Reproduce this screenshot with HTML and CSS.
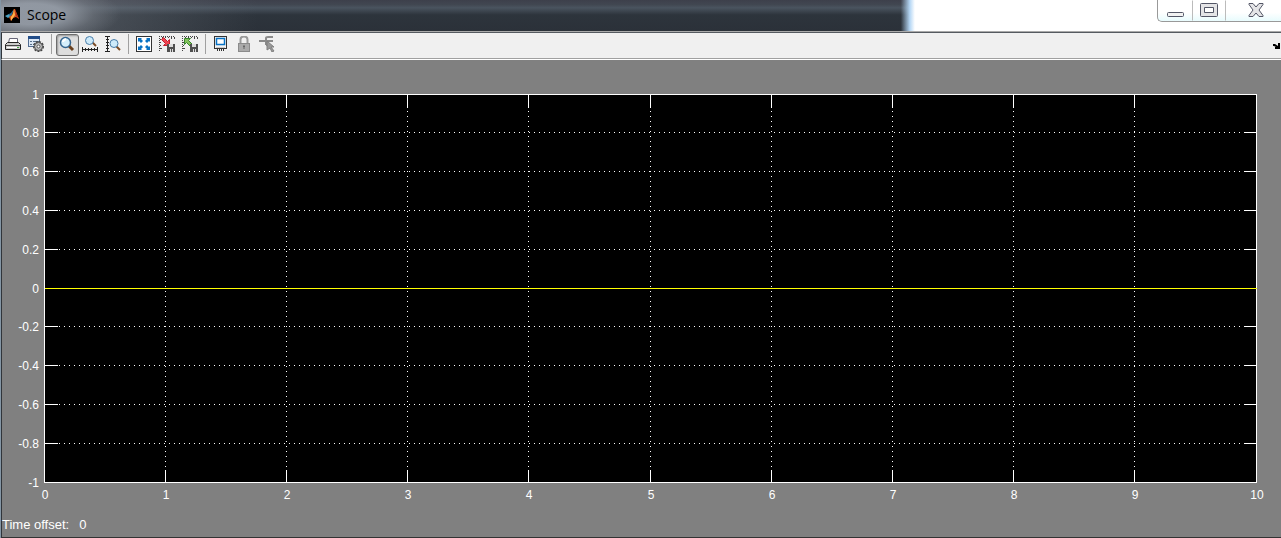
FILE: index.html
```html
<!DOCTYPE html>
<html lang="en">
<head>
    <meta charset="UTF-8">
    <meta name="viewport" content="width=device-width, initial-scale=1.0">
    <title>Scope</title>
    <link rel="stylesheet" href="styles.css">
</head>
<body>

<div class="window">
    <header class="titlebar">
        <svg class="logo" viewBox="0 0 16 16" width="16" height="16">
            <rect width="16" height="16" fill="#000"/>
            <path d="M1 9L5 7L7 9L4 11z" fill="#4da3c4"/>
            <path d="M5 7L7 6L10 2L8 8L6 10z" fill="#2b6f94"/>
            <path d="M10 2L11 2L15 12L12 10L9 11L7 14L5 10L8 8z" fill="#d8501c"/>
            <path d="M10 2L11 8L9 11L7 14L7 10L9 7z" fill="#ffb347"/>
            <path d="M11 3L15 12L12 9z" fill="#a32b16"/>
        </svg>
        <h1>Scope</h1>
        <div class="window-buttons">
            <button class="minimize" aria-label="Minimize">
                <svg viewBox="0 0 17 5" width="17" height="5"><rect x=".5" y=".5" width="16" height="4" rx="1" fill="#f2f2f2" stroke="#535666"/></svg>
            </button>
            <button class="maximize" aria-label="Maximize">
                <svg viewBox="0 0 18 14" width="18" height="14"><path d="M1.5.5h15q1 0 1 1v11q0 1-1 1h-15q-1 0-1-1v-11q0-1 1-1zM4.500 4.500v5h9v-5z" fill="#e4e4e6" fill-rule="evenodd" stroke="#535666"/></svg>
            </button>
            <button class="close" aria-label="Close">
                <svg viewBox="0 0 16 14" width="16" height="14"><path d="M1 .5h4l3 3.500 3-3.500h4v1l-4 5.500 4 5.500v1h-4l-3-3.500-3 3.500H1v-1l4-5.500-4-5.500z" fill="#e4e4e6" stroke="#535666"/></svg>
            </button>
        </div>
    </header>

    <div class="toolbar">
        <button aria-label="Print">
            <svg viewBox="0 0 16 16" width="16" height="16">
                <path d="M3.500 7L4.500 2.500h8L12.500 7" fill="#fff" stroke="#667"/>
                <path d="M.5 8.500l2-2h11l2 2v5H.5z" fill="#ccc" stroke="#222"/>
                <path d="M1 9.500h14" stroke="#444"/>
                <path d="M2 11.500h10" stroke="#fff"/>
                <path d="M12 11.500h2" stroke="#4a4"/>
            </svg>
        </button>
        <button aria-label="Parameters">
            <svg viewBox="0 0 16 16" width="16" height="16">
                <rect x=".5" y=".5" width="11" height="10" fill="#dce8f5" stroke="#526c91"/>
                <path d="M0 1.500h12" stroke="#224d88" stroke-width="3"/>
                <path d="M2 5.500h2M2 8.500h2M5 5.500h6M5 8.500h5" stroke="#58708c"/>
                <circle cx="10.500" cy="10.500" r="4.500" fill="#aaa" stroke="#444" stroke-width="2" stroke-dasharray="2 1"/>
                <circle cx="10.500" cy="10.500" r="4" fill="#bbb" stroke="#555"/>
                <circle cx="10.500" cy="10.500" r="1.500" fill="#fff" stroke="#555"/>
            </svg>
        </button>
        <span class="separator"></span>
        <button class="active" aria-label="Zoom">
            <svg viewBox="0 0 16 16" width="16" height="16">
                <path d="M10 10l4 4" stroke="#69401f" stroke-width="3"/>
                <circle cx="6.500" cy="6.500" r="5" fill="#d5eefb" stroke="#35658f" stroke-width="1.500"/>
                <path d="M4 6q0-2 3-3" fill="none" stroke="#fff" stroke-width="2"/>
            </svg>
        </button>
        <button aria-label="Zoom X-axis">
            <svg viewBox="0 0 16 16" width="16" height="16">
                <path d="M10 6l4 4" stroke="#7a4a24" stroke-width="2"/>
                <circle cx="7.500" cy="4.500" r="4" fill="#cdeafa" stroke="#477ca8"/>
                <path d="M0 13.500h16M.5 11v5M3.500 12v3M6.500 12v3M9.500 12v3M12.500 12v3M15.500 11v5" stroke="#222"/>
            </svg>
        </button>
        <button aria-label="Zoom Y-axis">
            <svg viewBox="0 0 16 16" width="16" height="16">
                <path d="M11 10l4 4" stroke="#7a4a24" stroke-width="2"/>
                <circle cx="9" cy="7.500" r="4" fill="#cdeafa" stroke="#477ca8"/>
                <path d="M2.500 0v16M0 .5h5M1 3.500h3M1 6.500h3M1 9.500h3M1 12.500h3M0 15.500h5" stroke="#222"/>
            </svg>
        </button>
        <span class="separator"></span>
        <button aria-label="Autoscale">
            <svg viewBox="0 0 16 16" width="16" height="16">
                <rect x=".5" y=".5" width="15" height="15" fill="#fff" stroke="#333"/>
                <path d="M2 2h4L5 3l2 2-2 2-2-2-1 1zM14 2v4l-1-1-2 2-2-2 2-2-1-1zM2 14v-4l1 1 2-2 2 2-2 2 1 1zM14 14h-4l1-1-2-2 2-2 2 2 1-1z" fill="#0872c4"/>
            </svg>
        </button>
        <button aria-label="Save current axes settings">
            <svg viewBox="0 0 16 16" width="16" height="16">
                <path d="M0 .5h16M.5 0v15" stroke="#444" stroke-dasharray="1 1"/>
                <path d="M3.500 1v1M6.500 1v1M9.500 1v1M12.500 1v2M15.500 1v2M1 3.500h1M1 6.500h1M1 9.500h1M1 12.500h2" stroke="#444"/>
                <path d="M2.500 3.500l2-2 4 4 2-2v6h-6l2-2z" fill="#f04450" stroke="#c01f2e"/>
                <path d="M8 8h8v8H8z" fill="#505050"/>
                <path d="M10 8h4v3h-4zM11 13h1v3h-1zM13 13h1v3h-1z" fill="#ddd"/>
            </svg>
        </button>
        <button aria-label="Restore saved axes settings">
            <svg viewBox="0 0 16 16" width="16" height="16">
                <path d="M0 .5h16M.5 0v15" stroke="#444" stroke-dasharray="1 1"/>
                <path d="M3.500 1v1M6.500 1v1M9.500 1v1M12.500 1v2M15.500 1v2M1 6.500h1M1 9.500h1M1 12.500h2" stroke="#444"/>
                <path d="M2.500 2.500h6l-2 2 4 4-2 2-4-4-2 2z" fill="#84c45c" stroke="#37832d"/>
                <path d="M8 8h8v8H8z" fill="#505050"/>
                <path d="M10 8h4v3h-4zM11 13h1v3h-1zM13 13h1v3h-1z" fill="#ddd"/>
            </svg>
        </button>
        <span class="separator"></span>
        <button aria-label="Floating scope">
            <svg viewBox="0 0 16 16" width="16" height="16">
                <rect x="1.500" y=".5" width="12" height="12" fill="#f4f4f4" stroke="#333"/>
                <rect x="3.500" y="2.500" width="8" height="6" fill="#fff" stroke="#0872c4" stroke-width="1.500"/>
                <path d="M3 11.500h9" stroke="#ccc"/>
                <path d="M4.500 13v2M6.500 13v2M8.500 13v2M10.500 13v2" stroke="#333"/>
            </svg>
        </button>
        <button aria-label="Lock axes selection" disabled>
            <svg viewBox="0 0 16 16" width="16" height="16">
                <path d="M4.500 8V3.500q0-3 3.500-3t3.500 3V8" fill="none" stroke="#999" stroke-width="2"/>
                <rect x="2.500" y="7.500" width="11" height="8" fill="#aaa" stroke="#8b8b8b"/>
                <path d="M8 9v4M7 10.500h2" stroke="#666"/>
            </svg>
        </button>
        <button aria-label="Signal selection" disabled>
            <svg viewBox="0 0 16 16" width="16" height="16">
                <path d="M0 5h14M7 9V2q0-1 2-1h5M7 9h4" fill="none" stroke="#8b8b8b" stroke-width="2"/>
                <path d="M8 5l7 6h-3l3 4-2 1-2-4-3 2z" fill="#999" stroke="#808080"/>
            </svg>
        </button>
        <button class="dock" aria-label="Dock">
            <svg viewBox="0 0 7 6" width="7" height="6"><path d="M0 1h2l3 2V0h2v6H2V4h1L1 3H0z"/></svg>
        </button>
    </div>

    <main>
        <svg class="plot" id="plot"></svg>
        <p class="status"><span>Time offset:</span><span>0</span></p>
    </main>
</div>

<script>
    const xMin = 0, xMax = 10, xStep = 1;
    const yMin = -1, yMax = 1, yStep = 0.2;
    const tick = 13;
    const plot = document.getElementById('plot');

    function line(x1, y1, x2, y2, cls) {
        return `<path class="${cls}" d="M${x1} ${y1}L${x2} ${y2}"/>`;
    }

    function draw() {
        const box = plot.getBoundingClientRect();
        const w = Math.floor(box.width) - 1;
        const h = Math.floor(box.height) - 1;
        let lines = `<rect class="area" width="${w}" height="${h}"/>`;
        let labels = '';

        const columns = Math.round((xMax - xMin) / xStep);
        for (let i = 0; i <= columns; i++) {
            const x = Math.floor(w * i / columns);
            if (i > 0 && i < columns) {
                lines += line(x, tick + 3, x, h - tick, 'grid');
                lines += line(x, 0, x, tick, 'axis');
                lines += line(x, h - tick, x, h, 'axis');
            }
            labels += `<text class="x-label" x="${x + 1}" y="${h + 17}">${xMin + i * xStep}</text>`;
        }

        const rows = Math.round((yMax - yMin) / yStep);
        for (let i = 0; i <= rows; i++) {
            const y = Math.floor(h * i / rows);
            if (i > 0 && i < rows) {
                lines += line(tick + 1, y, w - tick, y, 'grid');
                lines += line(0, y, tick, y, 'axis');
                lines += line(w - tick, y, w, y, 'axis');
            }
            const value = Number((yMax - i * yStep).toFixed(1)) || 0;
            labels += `<text class="y-label" x="-5" y="${y + 5}">${value}</text>`;
        }

        // signal is flat at zero
        const zero = Math.floor(h * yMax / (yMax - yMin));
        lines += line(0, zero, w, zero, 'signal');
        plot.innerHTML = `<g transform="translate(.5 .5)">${lines}</g>${labels}`;
    }

    window.addEventListener('resize', draw);
    draw();
</script>

</body>
</html>
```
FILE: styles.css
```css
* {
    box-sizing: border-box;
}
body {
    margin: 0;
    font-family: "Liberation Sans", Arial, sans-serif;
}
.window {
    display: flex;
    flex-direction: column;
    min-height: 100vh;
    border-left: 1px solid #8496a5;
    background-color: #808080;
}
.titlebar {
    display: flex;
    align-items: center;
    height: 32px;
    padding: 0 0 2px 3px;
    border-bottom: 1px solid #aaa;
    background:
        radial-gradient(ellipse 90px 30px at 30px 14px, rgba(150,157,167,0.9) 35%, rgba(130,136,145,0.4) 70%, transparent),
        linear-gradient(to right, rgba(120,126,134,0.6), transparent 20%),
        linear-gradient(to right, transparent 70.3%, #b4d6f4 71%, #fff 71.4%),
        linear-gradient(#3d404b, #414751 15%, #4a545f 25%, #2d343c 48%, #2b3139);
}
h1 {
    flex: 1;
    margin: 0 0 0 7px;
    font: 14px "Open Sans", "Segoe UI", sans-serif;
    color: #000;
}
.logo {
    display: block;
}
button {
    display: flex;
    align-items: center;
    justify-content: center;
    padding: 0;
    border: 1px solid transparent;
    background: none;
}
.window-buttons {
    display: flex;
    align-self: flex-start;
    height: 22px;
    border: 1px solid #999;
    border-width: 0 0 1px 1px;
    border-bottom-left-radius: 5px;
    background: linear-gradient(#fff 60%, #e8fbfd);
}
.minimize {
    width: 35px;
    padding-top: 7px;
    border-right-color: #bbb;
}
.maximize {
    width: 33px;
    padding: 0 2px 2px 0;
    border-right-color: #bbb;
}
.close {
    width: 55px;
    padding: 0 0 2px 4px;
}
.toolbar {
    display: flex;
    height: 28px;
    padding-top: 1px;
    border-top: 1px solid #555a60;
    border-left: 1px solid #30353b;
    border-bottom: 1px solid #fff;
    background-color: #f0f0f0;
    box-shadow: inset 0 -1px #a0a0a0;
}
.toolbar button {
    width: 23px;
    height: 22px;
    padding: 0 1px 2px 0;
}
.toolbar .active {
    border: 1px solid #6d6d6d;
    border-radius: 3px;
    background-color: #dedede;
    box-shadow: inset 1px 1px 2px #999;
}
.separator {
    width: 8px;
    height: 20px;
    border-left: 3px solid #f0f0f0;
    background: linear-gradient(to right, #a0a0a0 1px, transparent 1px);
}
.toolbar .dock {
    width: 9px;
    padding: 2px 0 0;
    margin-left: auto;
}
main {
    display: flex;
    flex: 1;
    flex-direction: column;
    border-left: 1px solid #30353b;
    border-bottom: 1px solid #333;
}
.plot {
    flex: 1;
    width: calc(100% - 66px);
    min-height: 200px;
    margin: 34px 24px 0 42px;
    overflow: visible;
    font-size: 12px;
}
.plot path, .plot rect {
    shape-rendering: crispEdges;
}
.area {
    fill: #000;
    stroke: #fff;
}
.axis {
    stroke: #fff;
}
.grid {
    stroke: #fff;
    stroke-dasharray: 1 4;
}
.signal {
    stroke: #ff0;
}
.plot text {
    fill: #fff;
}
.x-label {
    text-anchor: middle;
}
.y-label {
    text-anchor: end;
}
.status {
    display: flex;
    gap: 10px;
    margin: 34px 0 4px;
    font-size: 13px;
    line-height: 16px;
    color: #fff;
}
```
